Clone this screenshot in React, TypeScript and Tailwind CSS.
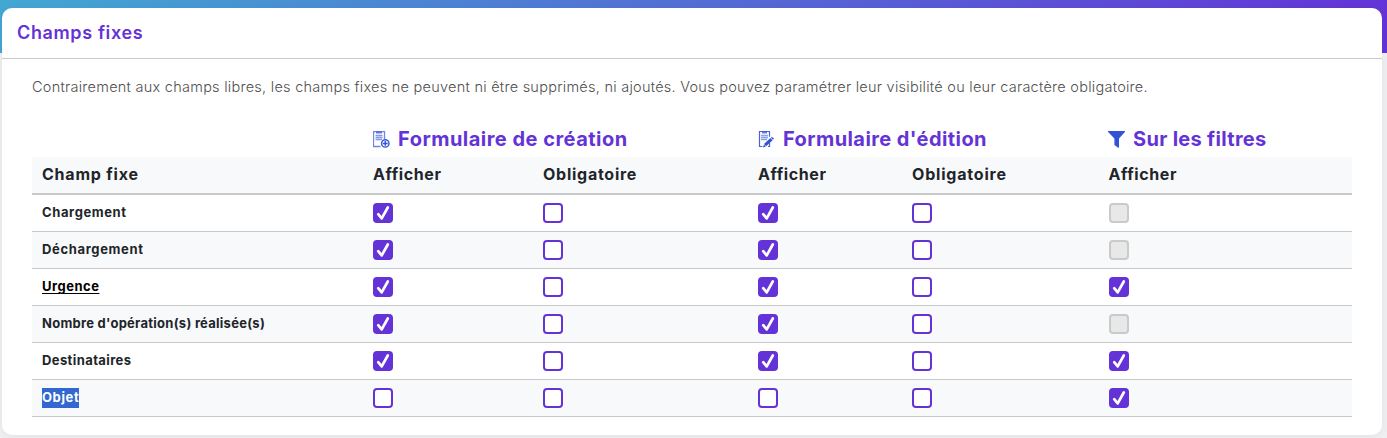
import React from "react";

type State = "on" | "off" | "disabled";

const COLS = "grid grid-cols-[331px_170px_215px_154px_197px_253px]";

const ROWS: { label: React.ReactNode; cells: State[] }[] = [
  { label: <span className="tracking-[0.6px]">Chargement</span>, cells: ["on", "off", "on", "off", "disabled"] },
  { label: <span className="tracking-[0.65px]">Déchargement</span>, cells: ["on", "off", "on", "off", "disabled"] },
  {
    label: <span className="tracking-[0.5px] text-black underline decoration-1 underline-offset-2">Urgence</span>,
    cells: ["on", "off", "on", "off", "on"],
  },
  { label: <span className="tracking-[0.26px]">Nombre d'opération(s) réalisée(s)</span>, cells: ["on", "off", "on", "off", "disabled"] },
  { label: <span className="tracking-[0.4px]">Destinataires</span>, cells: ["on", "off", "on", "off", "on"] },
  {
    label: <span className="block h-5 w-[37px] bg-[#3367d1] leading-[19px] tracking-[0.6px] text-white">Objet</span>,
    cells: ["off", "off", "off", "off", "on"],
  },
];

function Check({ state }: { state: State }) {
  if (state === "on") {
    return (
      <span className="block size-5 rounded-[4px] bg-[#6433d7]">
        <svg viewBox="0 0 20 20" className="size-5" fill="none" stroke="#fff" strokeWidth="2.7" strokeLinecap="round" strokeLinejoin="round">
          <path d="M5.2 11.2 8.7 15.4 14.8 4.5" />
        </svg>
      </span>
    );
  }
  if (state === "disabled") {
    return <span className="block size-5 rounded-[4px] border-2 border-[#cacaca] bg-[#e8e8e8]" />;
  }
  return <span className="block size-5 rounded-[4px] border-2 border-[#6433d7] bg-white" />;
}

function FormAddIcon() {
  return (
    <svg viewBox="0 0 17 17" className="h-[17px] w-[17px]" fill="none" stroke="#3353d7">
      <path d="M7.5 15.5H.5V.5h11v7.5" strokeWidth="1.3" opacity=".7" />
      <path d="M3 1.5h6" strokeWidth="2" opacity=".75" />
      <path d="M2.5 4.5h7M2.5 6.5h7M2.5 8.5h6.5" strokeWidth="1.6" opacity=".6" />
      <circle cx="12.3" cy="12.4" r="3.7" strokeWidth="1.4" fill="#fff" />
      <path d="M12.3 10v4.8M9.9 12.4h4.8" strokeWidth="1.5" />
    </svg>
  );
}

function FormEditIcon() {
  return (
    <svg viewBox="0 0 17 17" className="h-[17px] w-[17px]" fill="none" stroke="#3353d7">
      <path d="M4.5 15.5H1.5V.5h10v5.2M11.5 11.5v4H10" strokeWidth="1.2" opacity=".9" />
      <path d="M4 1.5h5" strokeWidth="2" opacity=".75" />
      <path d="M3 4.5h7M3 6.5h7M3 8.5h6" strokeWidth="1.6" opacity=".55" />
      <path d="m7.1 14.2 6.4-6" strokeWidth="3.2" />
      <path d="m14 7.7 1-1" strokeWidth="2.8" />
      <path d="m5 16.5.9-3 2 2.1z" fill="#3353d7" stroke="none" />
    </svg>
  );
}

function FilterIcon() {
  return (
    <svg viewBox="0 0 17 17" className="h-[17px] w-[17px]" fill="#3353d7">
      <path d="M.4 0h16.2c.5 0 .6.5.3.9L11 7.5V16c0 .8-.7 1-1.2.6l-3-2.3c-.3-.2-.4-.5-.4-.8V7.5L.1.9C-.2.5 0 0 .4 0z" />
    </svg>
  );
}

export default function App() {
  return (
    <div className="h-[438px] w-[1387px] overflow-hidden bg-[linear-gradient(100deg,#42a8d2_0%,#6433d7_100%)] bg-[length:1387px_53px] bg-no-repeat bg-[#efeff1] pt-2 pl-0.5 font-['Inter','Open_Sans',sans-serif] text-[#212529]">
      <main className="h-[427px] w-[1380px] rounded-[10px] bg-white shadow-[0_2px_8px_rgba(0,0,0,0.05)]">
        <header className="flex h-[51px] items-center border-b border-[#c9c9c9] pb-0.5 pl-[15px]">
          <h1 className="text-[18px] font-semibold tracking-[0.63px] whitespace-nowrap text-[#6433d7]">Champs fixes</h1>
        </header>
        <div className="px-[30px] pt-[17px]">
          <p className="h-[22px] text-[14.5px] leading-[22px] font-light tracking-[0.257px] whitespace-nowrap text-[#505050]">
            Contrairement aux champs libres, les champs fixes ne peuvent ni être supprimés, ni ajoutés. Vous pouvez paramétrer leur visibilité ou leur caractère obligatoire.
          </p>
          <section className="mt-6">
            <div className="grid h-[35px] grid-cols-[331px_385px_351px_253px] text-[20px] leading-[32px] font-bold whitespace-nowrap text-[#6433d7]">
              <div />
              <h2 className="flex items-center gap-2 pl-2.5">
                <FormAddIcon />
                <span className="pb-0.5 tracking-[0.48px]">Formulaire de création</span>
              </h2>
              <h2 className="flex items-center gap-2 pl-2.5">
                <FormEditIcon />
                <span className="pb-0.5 tracking-[0.42px]">Formulaire d'édition</span>
              </h2>
              <h2 className="flex items-center gap-2 pl-[9px]">
                <FilterIcon />
                <span className="pb-0.5 tracking-[0.3px]">Sur les filtres</span>
              </h2>
            </div>
            <div className={`${COLS} h-[38px] items-center border-b-2 border-[#c9c9c9] bg-[#f8f9fb] pb-0.5 text-[16px] font-bold whitespace-nowrap`}>
              <div className="pl-2.5 tracking-[0.78px]">Champ fixe</div>
              <div className="pl-2.5 tracking-[0.6px]">Afficher</div>
              <div className="pl-2.5 tracking-[0.74px]">Obligatoire</div>
              <div className="pl-2.5 tracking-[0.6px]">Afficher</div>
              <div className="pl-2.5 tracking-[0.8px]">Obligatoire</div>
              <div className="pl-[9.5px] tracking-[0.6px]">Afficher</div>
            </div>
            {ROWS.map((row, i) => (
              <div
                key={i}
                className={`${COLS} h-[37px] items-center border-b border-[#c9c9c9] text-[13px] font-bold whitespace-nowrap ${i % 2 ? "bg-[#f8f9fb]" : "bg-white"}`}
              >
                <div className="flex pl-2.5">{row.label}</div>
                {row.cells.map((state, j) => (
                  <div key={j} className="pl-2.5">
                    <Check state={state} />
                  </div>
                ))}
              </div>
            ))}
          </section>
        </div>
      </main>
    </div>
  );
}
